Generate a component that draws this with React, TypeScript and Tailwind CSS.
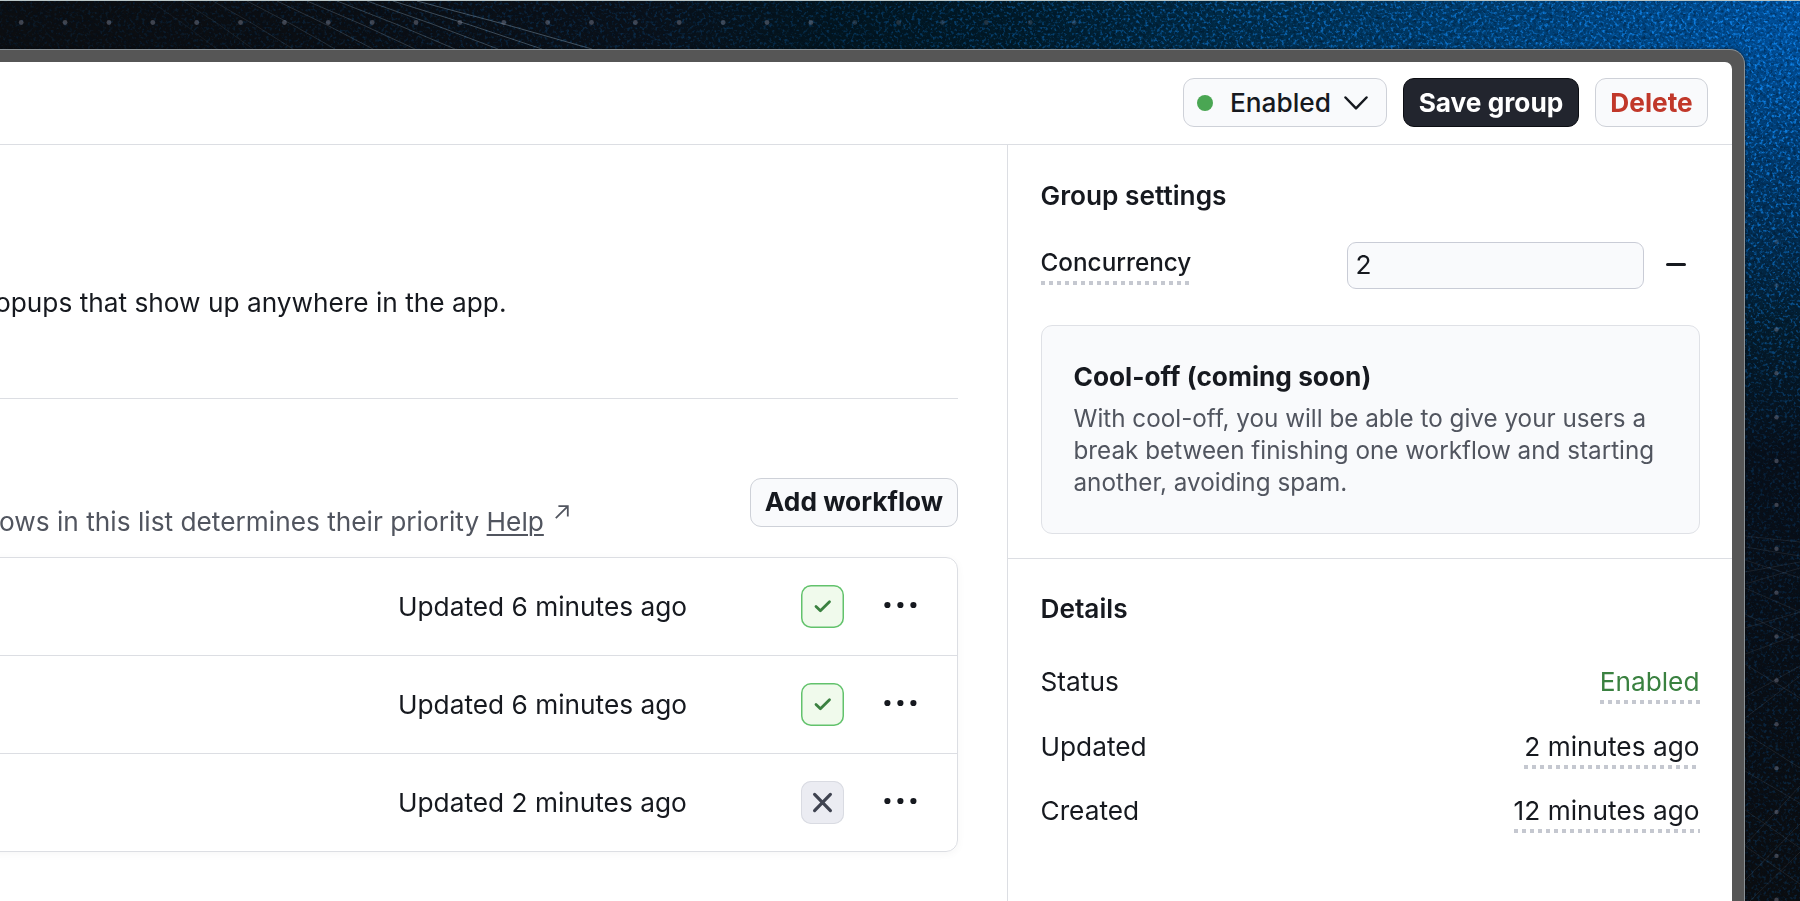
import type { ReactNode } from "react";

const GRID_STEP = 43.87;

const range = (n: number, start: number) => Array.from({ length: n }, (_, i) => start + i * GRID_STEP);

function Wallpaper() {
  const topDots = range(25, 21.2);
  const sideDots = range(16, 241.7);
  const rays = [
    [417, 592], [393, 542], [367, 498], [337, 455], [307, 415], [277, 373], [247, 335], [213, 293], [183, 253], [150, 217],
  ];
  return (
    <svg className="absolute inset-0 h-full w-full" viewBox="0 0 1800 901" preserveAspectRatio="none" aria-hidden="true">
      <defs>
        <linearGradient id="sky" x1="0" x2="1" y1="0" y2="0">
          <stop offset="0" stopColor="#0c0e11" />
          <stop offset="0.2" stopColor="#0b0e13" />
          <stop offset="0.36" stopColor="#0a111a" />
          <stop offset="0.46" stopColor="#03151f" />
          <stop offset="0.56" stopColor="#011a28" />
          <stop offset="0.68" stopColor="#002a46" />
          <stop offset="0.8" stopColor="#003a68" />
          <stop offset="0.92" stopColor="#004684" />
          <stop offset="1" stopColor="#004f9a" />
        </linearGradient>
        <linearGradient id="fall" x1="0" x2="0" y1="0" y2="1">
          <stop offset="0.05" stopColor="#03203a" stopOpacity="0" />
          <stop offset="0.2" stopColor="#032038" stopOpacity="0.55" />
          <stop offset="0.36" stopColor="#041a28" stopOpacity="0.95" />
          <stop offset="0.5" stopColor="#080f19" stopOpacity="1" />
          <stop offset="1" stopColor="#0b0d10" stopOpacity="1" />
        </linearGradient>
        <linearGradient id="grainX" x1="0" x2="1" y1="0" y2="0">
          <stop offset="0" stopColor="#fff" stopOpacity="0.1" />
          <stop offset="0.45" stopColor="#fff" stopOpacity="0.24" />
          <stop offset="0.7" stopColor="#fff" stopOpacity="0.6" />
          <stop offset="1" stopColor="#fff" stopOpacity="0.95" />
        </linearGradient>
        <linearGradient id="grainFall" x1="0" x2="0" y1="0" y2="1">
          <stop offset="0.1" stopColor="#000" stopOpacity="0" />
          <stop offset="0.5" stopColor="#000" stopOpacity="0.8" />
        </linearGradient>
        <mask id="grainMask">
          <rect width="1800" height="901" fill="url(#grainX)" />
          <rect x="1740" width="60" height="901" fill="url(#grainFall)" />
        </mask>
        <filter id="grain" x="0" y="0" width="1" height="1" colorInterpolationFilters="sRGB">
          <feTurbulence type="fractalNoise" baseFrequency="0.33" numOctaves="2" seed="7" />
          <feColorMatrix values="0 0 0 0 0.06  0 0 0 0 0.52  0 0 0 0 0.92  4 0 0 0 -2.05" />
        </filter>
        <filter id="shade" x="0" y="0" width="1" height="1" colorInterpolationFilters="sRGB">
          <feTurbulence type="fractalNoise" baseFrequency="0.3" numOctaves="2" seed="21" />
          <feColorMatrix values="0 0 0 0 0  0 0 0 0 0.06  0 0 0 0 0.12  2.4 0 0 0 -1.1" />
        </filter>
      </defs>
      <rect width="1800" height="901" fill="url(#sky)" />
      <rect x="1740" width="60" height="901" fill="url(#fall)" />
      <g opacity="0.5">
        <rect width="1800" height="50" filter="url(#shade)" />
        <rect x="1744" y="50" width="56" height="851" filter="url(#shade)" />
      </g>
      <g mask="url(#grainMask)">
        <rect width="1800" height="50" filter="url(#grain)" />
        <rect x="1744" y="50" width="56" height="851" filter="url(#grain)" />
      </g>
      <g stroke="#7b93a8" strokeWidth="1" fill="none">
        {rays.map(([from, to], i) => (
          <path key={to} d={`M${from} 1 Q${(from + to) / 2 + 2} 24 ${to} 49`} strokeOpacity={0.5 - i * 0.045} />
        ))}
      </g>
      <g stroke="#7f8b99" strokeWidth="1" strokeOpacity="0.16" fill="none">
        <path d="M1745 536 L1800 542 M1745 547 L1800 556 M1745 572 L1800 562 M1745 560 L1800 578" />
        <path d="M1745 588 L1800 612 M1745 614 L1800 641 M1745 584 L1800 568 M1745 628 L1800 612" />
        <path d="M1745 654 L1800 634 M1745 664 L1800 698 M1745 697 L1800 666 M1745 733 L1800 768 M1745 718 L1800 676" />
        <path d="M1745 771 L1800 803 M1745 810 L1800 848 M1745 845 L1800 786 M1745 846 L1800 884 M1745 880 L1800 824 M1750 901 L1800 852" />
      </g>
      <g fill="#8b8fa3">
        {topDots.map((x) => (
          <circle key={x} cx={x} cy="22.5" r="2.4" fillOpacity={x < 850 ? 0.42 : 0.24} />
        ))}
        {sideDots.map((y) => (
          <circle key={y} cx="1776.5" cy={y} r="2.2" fillOpacity={y > 300 ? 0.4 : 0.24} />
        ))}
      </g>
    </svg>
  );
}

function Chevron() {
  return (
    <svg className="h-[14px] w-[24px]" viewBox="0 0 24 14" fill="none" stroke="#16191f" strokeWidth="2.5" strokeLinecap="round" strokeLinejoin="round">
      <path d="M1.5 1.5 L12 12.3 L22.5 1.5" />
    </svg>
  );
}

function Check() {
  return (
    <svg className="h-[43px] w-[43px]" viewBox="0 0 43 43" fill="none" stroke="#3a8140" strokeWidth="2.8" strokeLinecap="round" strokeLinejoin="round">
      <path d="M15 21.5 L19.4 25.8 L28.5 16.7" />
    </svg>
  );
}

function Cross() {
  return (
    <svg className="h-[43px] w-[43px]" viewBox="0 0 43 43" fill="none" stroke="#3f4350" strokeWidth="3.2" strokeLinecap="round">
      <path d="M13.6 13.4 L29.4 29.6 M29.4 13.4 L13.6 29.6" />
    </svg>
  );
}

function MoreDots() {
  return (
    <svg className="block h-[8px] w-[34px]" viewBox="0 0 34 8" fill="#16191f">
      <circle cx="4.4" cy="4" r="3.1" />
      <circle cx="17.4" cy="4" r="3.1" />
      <circle cx="30.4" cy="4" r="3.1" />
    </svg>
  );
}

function ArrowUpRight() {
  return (
    <svg className="mt-px h-[14px] w-[14px]" viewBox="0 0 14 14" fill="none" stroke="#51555f" strokeWidth="1.8">
      <path d="M0.8 13.2 L12.4 1.6 M3.4 1.2 H12.8 V11.4" />
    </svg>
  );
}

function DottedText({ children }: { children: ReactNode }) {
  return (
    <span className="flex flex-col">
      <span>{children}</span>
      <span className="h-1 bg-[linear-gradient(to_right,#c5c8d0_50%,transparent_50%)] bg-[length:8px_4px] bg-repeat-x" />
    </span>
  );
}

function WorkflowRow({ updated, enabled }: { updated: string; enabled: boolean }) {
  return (
    <div className="flex h-[98px] items-start border-b border-[#dcdee3] pl-4 last:h-[97px] last:border-b-0">
      <span className="ml-[397px] mt-[31px] w-[403px] whitespace-nowrap text-[26.25px] leading-9">{updated}</span>
      {enabled ? (
        <span className="mt-[27px] size-[43px] shrink-0 rounded-[10px] bg-[#f0faec] shadow-[inset_0_0_0_1.5px_#62c26c]"><Check /></span>
      ) : (
        <span className="mt-[27px] size-[43px] shrink-0 rounded-[10px] bg-[#ebecf2] shadow-[inset_0_0_0_1px_#d9dbe2]"><Cross /></span>
      )}
      <button className="ml-[39px] mt-[43px]" aria-label="More"><MoreDots /></button>
    </div>
  );
}

function DetailRow({ label, children, green }: { label: string; children: ReactNode; green?: boolean }) {
  return (
    <div className="flex h-[64.5px] items-start justify-between text-[26.25px] leading-[37px]">
      <span>{label}</span>
      <span className={green ? "text-[#3a8140]" : ""}><DottedText>{children}</DottedText></span>
    </div>
  );
}

export default function App() {
  return (
    <div className="relative h-[901px] w-[1800px] overflow-hidden bg-[#0b0d10] font-['Inter',sans-serif] font-[430] text-[#16191f]">
      <Wallpaper />
      <div className="relative flex h-[901px] flex-col border-t border-[#b9c5c6] pt-12">
        <div className="h-[852px] w-[1745px] rounded-tr-[15px] border-r border-t border-[#8a9094] bg-[#565656] pr-3 pt-3 shadow-[0_0_3px_#000a]">
          <div className="flex h-[840px] flex-col overflow-hidden rounded-tr-[7px] bg-white">
            <header className="flex h-[83px] shrink-0 justify-end gap-4 border-b border-[#dcdee3] pr-6 pt-4">
              <button className="flex h-[49px] w-[204px] items-center rounded-[11px] border-[1.5px] border-[#ced1d8] bg-[#f9fafc] pl-[13px] text-[26.25px] font-medium">
                <span className="mr-[17px] size-4 rounded-full bg-[#4aa653]" />
                <span className="mr-[13px]">Enabled</span>
                <Chevron />
              </button>
              <button className="h-[49px] w-[176px] whitespace-nowrap rounded-[11px] border border-[#0b0d12] bg-[#22252e] text-[26.25px] font-[650] text-white">Save group</button>
              <button className="h-[49px] w-[113px] rounded-[11px] border-[1.5px] border-[#ced1d8] bg-[#f9fafc] text-[26.25px] font-[650] text-[#c1382a]">Delete</button>
            </header>
            <div className="flex min-h-0 flex-1">
              <main className="w-[1007px] shrink-0 pr-[49px]">
                <p className="flex h-[254px] items-end justify-between border-b border-[#dcdee3] pb-[77px]">
                  <span className="-ml-[5px] whitespace-nowrap text-[26.25px] leading-9">opups that show up anywhere in the app.</span>
                </p>
                <div className="flex h-[158px] items-start justify-between pt-[79px]">
                  <p className="-ml-px mt-[26px] flex whitespace-nowrap text-[26.25px] leading-9 text-[#51555f]">
                    <span>ows in this list determines their priority&nbsp;</span>
                    <a className="mr-[11px] underline decoration-[1.5px] underline-offset-[3px]">Help</a>
                    <ArrowUpRight />
                  </p>
                  <button className="h-[49px] w-[208px] whitespace-nowrap rounded-[11px] border-[1.5px] border-[#ced1d8] bg-[#f9fafc] pb-[2px] text-[26.25px] font-[650]">Add workflow</button>
                </div>
                <section className="-ml-4 rounded-[12px] border-[1.5px] border-[#dcdee3] shadow-[0_2px_8px_#0000000a]">
                  <WorkflowRow updated="Updated 6 minutes ago" enabled />
                  <WorkflowRow updated="Updated 6 minutes ago" enabled />
                  <WorkflowRow updated="Updated 2 minutes ago" enabled={false} />
                </section>
              </main>
              <aside className="min-w-0 flex-1 border-l border-[#dcdee3]">
                <section className="h-[414px] border-b border-[#dcdee3] pl-[32.5px] pr-[32.5px] pt-[33px]">
                  <h2 className="text-[26.25px] font-semibold leading-9">Group settings</h2>
                  <div className="mt-[28px] flex items-start">
                    <span className="mt-[2px] text-[24.3px] font-medium leading-[37px]"><DottedText>Concurrency</DottedText></span>
                    <span className="ml-auto flex h-[47px] w-[297px] items-center rounded-[9px] border-[1.5px] border-[#c9ccd6] bg-[#f9fafc] pb-px pl-[8px] text-[26.25px]">2</span>
                    <span className="ml-[22px] mr-[14px] mt-[21px] h-[3px] w-[20px] rounded-full bg-[#16191f]" />
                  </div>
                  <div className="mt-9 h-[209px] rounded-[11px] border-[1.5px] border-[#dfe1e6] bg-[#f9fafc] px-8 pt-[33px]">
                    <h3 className="text-[26.25px] font-[650] leading-9">Cool-off (coming soon)</h3>
                    <p className="mt-2 whitespace-nowrap text-[24.25px] leading-[32.2px] text-[#51555f]">
                      With cool-off, you will be able to give your users a<br />
                      break between finishing one workflow and starting<br />
                      another, avoiding spam.
                    </p>
                  </div>
                </section>
                <section className="px-[32.5px] pt-8">
                  <h2 className="mb-[36px] text-[26.25px] font-semibold leading-9">Details</h2>
                  <DetailRow label="Status" green>Enabled</DetailRow>
                  <DetailRow label="Updated">2 minutes ago</DetailRow>
                  <DetailRow label="Created">12 minutes ago</DetailRow>
                </section>
              </aside>
            </div>
          </div>
        </div>
      </div>
    </div>
  );
}
